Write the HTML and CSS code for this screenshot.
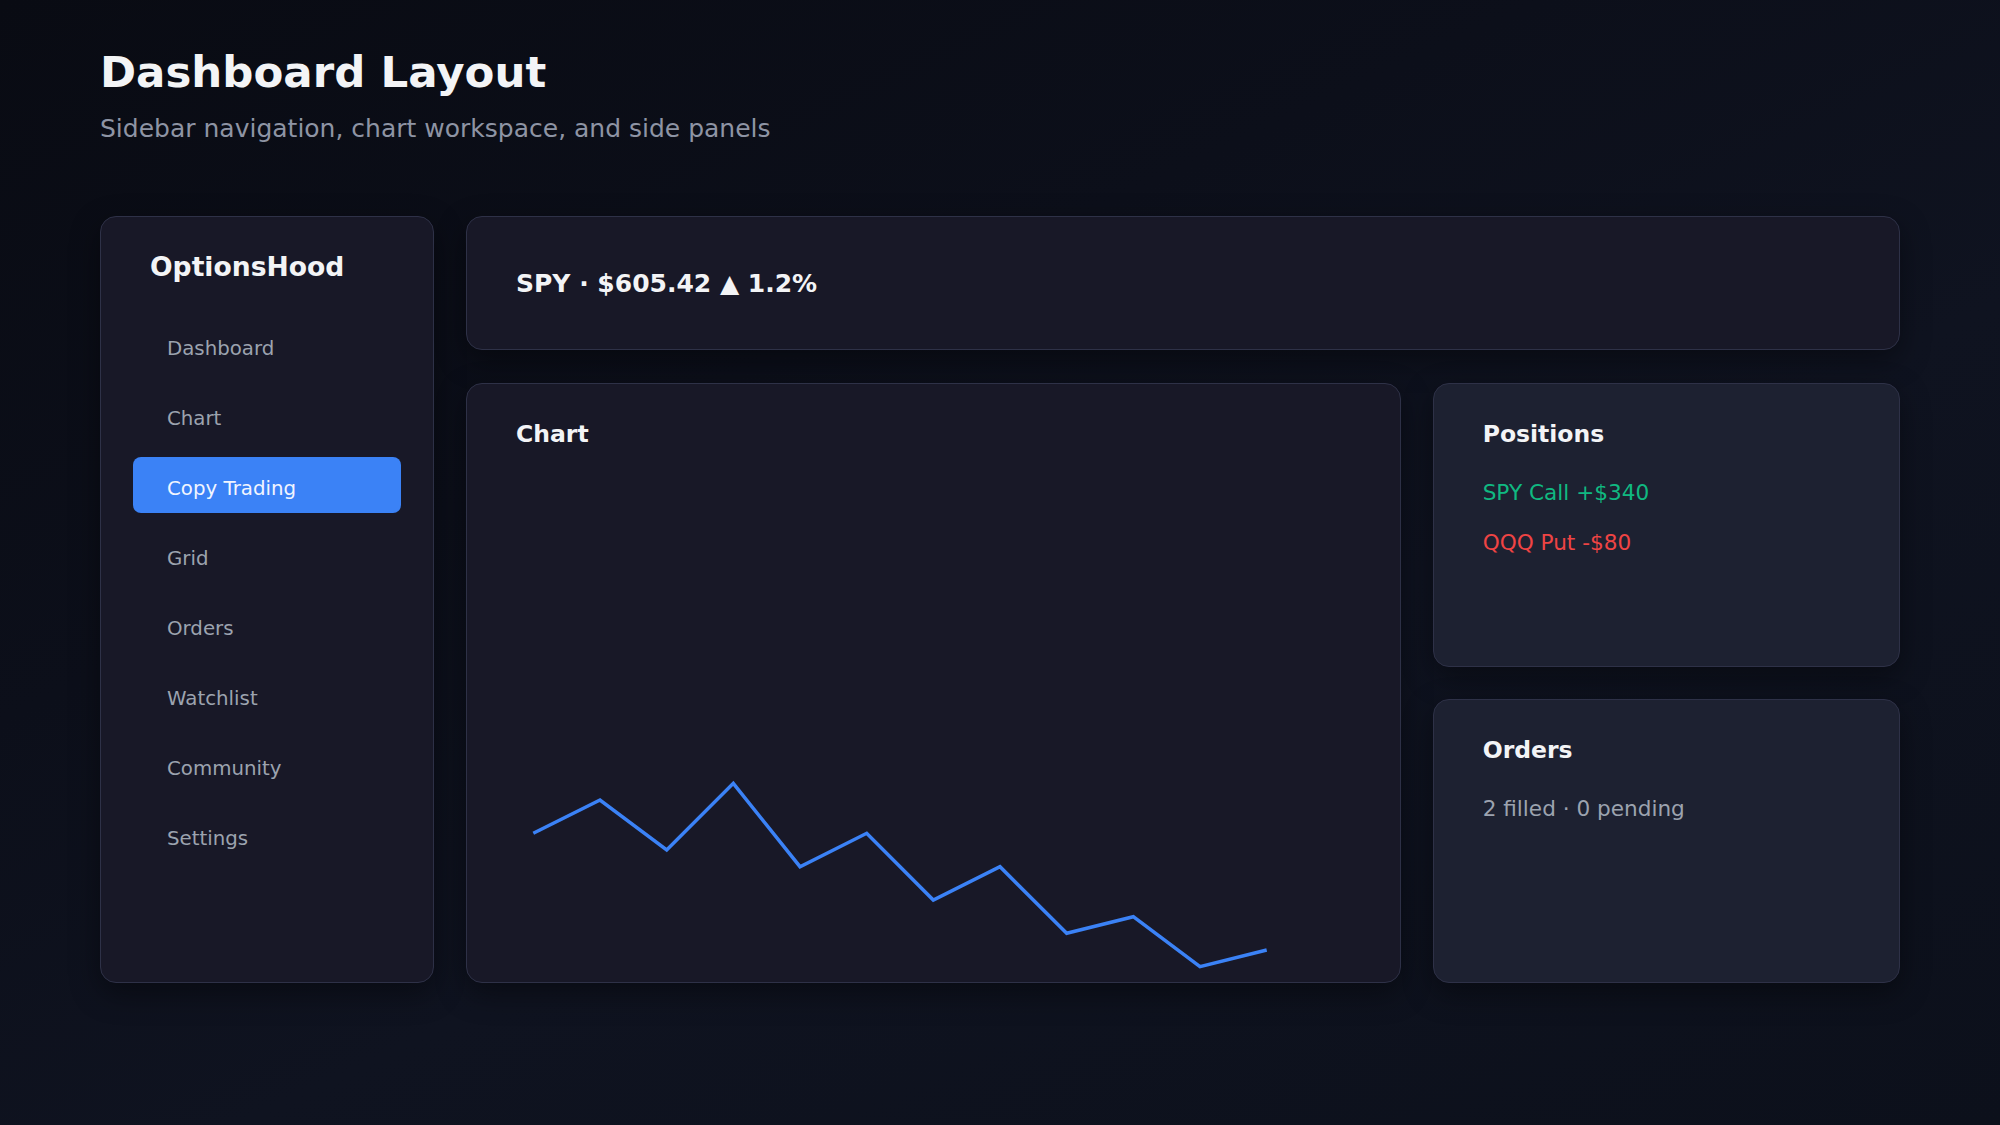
FILE: index.html
```html
<!DOCTYPE html>
<html lang="en">
<head>
<meta charset="utf-8">
<title>Dashboard Layout</title>
<link rel="stylesheet" href="styles.css">
</head>
<body>
<div class="page">
  <h1 class="title">Dashboard Layout</h1>
  <p class="subtitle">Sidebar navigation, chart workspace, and side panels</p>

  <div class="layout">
    <aside class="card sidebar">
      <div class="brand">OptionsHood</div>
      <nav class="nav">
        <div class="nav-item">Dashboard</div>
        <div class="nav-item">Chart</div>
        <div class="nav-item active">Copy Trading</div>
        <div class="nav-item">Grid</div>
        <div class="nav-item">Orders</div>
        <div class="nav-item">Watchlist</div>
        <div class="nav-item">Community</div>
        <div class="nav-item">Settings</div>
      </nav>
    </aside>

    <main class="main">
      <section class="card topbar">SPY · $605.42 ▲ 1.2%</section>

      <div class="workspace">
        <section class="card chart-card">
          <h2 class="card-title">Chart</h2>
          <svg class="chart-svg" width="836" height="533">
            <polyline points="17.3,384.3 84,351 150.7,401 217.3,334.3 284,417.7 350.7,384.3 417.3,451 484,417.7 550.7,484.3 617.3,467.7 684,517.7 750.7,501" fill="none" stroke="#3b82f6" stroke-width="3.5" stroke-linejoin="miter" stroke-linecap="butt"/>
          </svg>
        </section>

        <div class="side">
          <section class="card panel">
            <h2 class="card-title">Positions</h2>
            <ul class="lines">
              <li class="gain">SPY Call +$340</li>
              <li class="loss">QQQ Put -$80</li>
            </ul>
          </section>
          <section class="card panel">
            <h2 class="card-title">Orders</h2>
            <ul class="lines">
              <li class="muted">2 filled · 0 pending</li>
            </ul>
          </section>
        </div>
      </div>
    </main>
  </div>
</div>
</body>
</html>
```

FILE: styles.css
```css
* {
  box-sizing: border-box;
}

html, body {
  margin: 0;
  padding: 0;
}

body {
  width: 2000px;
  height: 1125px;
  overflow: hidden;
  font-family: "DejaVu Sans", "Liberation Sans", sans-serif;
  color: #f3f4f6;
  background: linear-gradient(155deg, #090b13 0%, #0c0f1a 35%, #0f1320 60%, #0c101b 100%);
}

.page {
  padding: 46px 100px 0 100px;
}

.title {
  margin: 0;
  font-size: 43.5px;
  line-height: 52px;
  font-weight: 700;
  color: #f3f4f6;
}

.subtitle {
  margin: 15px 0 0;
  font-size: 25px;
  line-height: 32px;
  color: #8e94a4;
}

.layout {
  margin-top: 71px;
  display: grid;
  grid-template-columns: 334px 1fr;
  gap: 32px;
  height: 767px;
}

.card {
  background: #181827;
  border: 1px solid #2e3147;
  border-radius: 16px;
  box-shadow: 0 10px 30px rgba(0, 0, 0, 0.4);
}

.sidebar {
  padding: 34px 32px;
}

.brand {
  padding-left: 17px;
  font-size: 26.6px;
  line-height: 32px;
  font-weight: 700;
  color: #f3f4f6;
}

.nav {
  margin-top: 34px;
  display: flex;
  flex-direction: column;
  gap: 14px;
}

.nav-item {
  height: 56px;
  padding: 20px 34px 12px;
  font-size: 19.8px;
  line-height: 24px;
  color: #9ca3af;
  border-radius: 8px;
}

.nav-item.active {
  background: #3b82f6;
  color: #f1f5ff;
}

.main {
  display: grid;
  grid-template-rows: 134px 1fr;
  gap: 33px;
  min-width: 0;
}

.topbar {
  display: flex;
  align-items: center;
  padding: 0 49px;
  font-size: 25px;
  font-weight: 700;
  color: #f3f4f6;
}

.workspace {
  display: grid;
  grid-template-columns: 2fr 1fr;
  gap: 32px;
  min-height: 0;
}

.chart-card {
  padding: 35px 49px 0;
  overflow: hidden;
}

.card-title {
  margin: 0;
  font-size: 23.5px;
  line-height: 30px;
  font-weight: 700;
  color: #f3f4f6;
}

.chart-svg {
  display: block;
  overflow: visible;
}

.side {
  display: grid;
  grid-template-rows: 1fr 1fr;
  gap: 32px;
  min-height: 0;
}

.panel {
  background: #1d2131;
  padding: 35px 49px;
}

.lines {
  list-style: none;
  margin: 29px 0 0;
  padding: 0;
  display: flex;
  flex-direction: column;
  gap: 20px;
}

.lines li {
  font-size: 21.6px;
  line-height: 30px;
}

.gain {
  color: #10b981;
}

.loss {
  color: #ef4444;
}

.muted {
  color: #9ca3af;
}
```
